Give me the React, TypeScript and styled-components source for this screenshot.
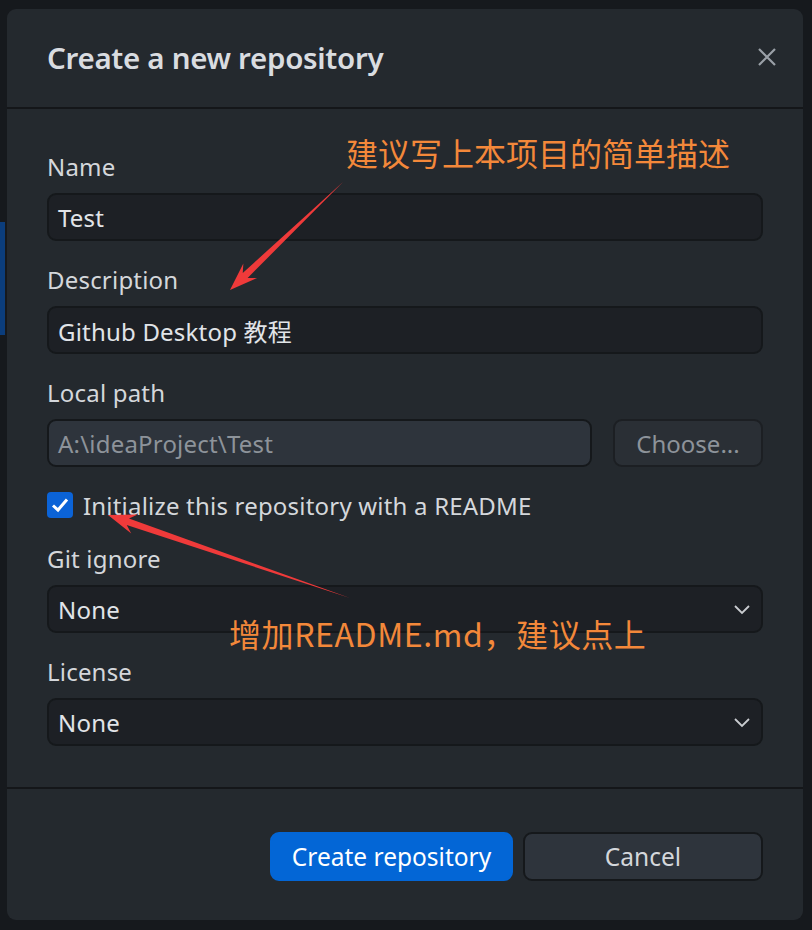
import React from 'react';
import styled, { createGlobalStyle } from 'styled-components';

const GlobalStyle = createGlobalStyle`
    html, body {
        margin: 0;
        padding: 0;
        background: #16191d;
    }
    * {
        box-sizing: border-box;
    }
`;

const Page = styled.div`
    display: flex;
    width: 812px;
    height: 930px;
    font-family: 'Noto Sans', 'Noto Sans CJK SC', sans-serif;
    overflow: hidden;
`;

// 뒤쪽 앱의 가장자리만 살짝 보임
const SideStrip = styled.div`
    width: 7px;
    flex-shrink: 0;
    padding-top: 222px;
`;

const SideBlue = styled.div`
    width: 5px;
    height: 113px;
    background: #0b3d7c;
`;

const Dialog = styled.section`
    position: relative;
    width: 796px;
    height: 911px;
    margin-top: 9px;
    background: #24292e;
    border-radius: 9px;
    display: flex;
    flex-direction: column;
`;

const Header = styled.header`
    height: 100px;
    display: flex;
    align-items: center;
    justify-content: space-between;
    padding: 0 22px 2px 40px;
    border-bottom: 2px solid #141619;
`;

const Title = styled.h1`
    margin: 0;
    font-size: 29.5px;
    font-weight: 600;
    color: #d9dce0;
    letter-spacing: -0.3px;
`;

const CloseButton = styled.button`
    background: none;
    border: none;
    padding: 4px;
    display: flex;
    cursor: pointer;
`;

const Body = styled.div`
    flex: 1;
    padding: 45px 40px 0 40px;
    display: flex;
    flex-direction: column;
    gap: 26px;
    border-bottom: 2px solid #141619;
`;

const Field = styled.div`
    display: flex;
    flex-direction: column;
    gap: 13px;
`;

const Label = styled.label`
    font-size: 24px;
    line-height: 26px;
    letter-spacing: 0.2px;
    color: #d4d7db;
`;

const Input = styled.div<{ $disabled?: boolean }>`
    height: 48px;
    flex: 1 1 auto;
    display: flex;
    align-items: center;
    padding: 0 10px 0 9px;
    border-radius: 9px;
    border: 2px solid #15181b;
    background: ${(p) => (p.$disabled ? '#2e343c' : '#1d2025')};
    color: ${(p) => (p.$disabled ? '#8d939a' : '#e1e4e8')};
    font-size: 24px;
    letter-spacing: 0.2px;
`;

const Row = styled.div`
    display: flex;
    gap: 21px;
`;

const ChooseButton = styled.button`
    width: 150px;
    height: 48px;
    flex-shrink: 0;
    border-radius: 9px;
    border: 2px solid #1c1f23;
    background: #2a2f35;
    color: #8d939a;
    font-family: inherit;
    font-size: 24px;
`;

const CheckRow = styled.div`
    height: 30px;
    margin-top: -3px;
    display: flex;
    align-items: center;
    gap: 10px;
    color: #d4d7db;
    font-size: 24px;
    letter-spacing: 0.2px;
`;

const CheckBox = styled.span`
    width: 26px;
    height: 26px;
    border-radius: 4px;
    background: #0b63d7;
    display: flex;
    align-items: center;
    justify-content: center;
`;

const Select = styled(Input)`
    justify-content: space-between;
`;

const Footer = styled.footer`
    height: 131px;
    display: flex;
    align-items: center;
    justify-content: flex-end;
    gap: 10px;
    padding: 4px 40px 0 0;
`;

const Button = styled.button<{ $primary?: boolean }>`
    height: 49px;
    width: ${(p) => (p.$primary ? '243px' : '240px')};
    border-radius: 9px;
    border: 2px solid ${(p) => (p.$primary ? '#0366d6' : '#15181b')};
    background: ${(p) => (p.$primary ? '#0366d6' : '#2e343c')};
    color: ${(p) => (p.$primary ? '#ffffff' : '#d4d7db')};
    font-family: inherit;
    font-size: 24.5px;
`;

const Note = styled.div<{ $left: number; $top: number; $spacing?: number }>`
    position: absolute;
    left: ${(p) => p.$left}px;
    top: ${(p) => p.$top}px;
    font-family: 'Noto Sans CJK SC', 'Noto Sans', sans-serif;
    font-size: 32px;
    line-height: 44px;
    letter-spacing: ${(p) => p.$spacing ?? 0}px;
    color: #f3883a;
    white-space: nowrap;
    pointer-events: none;
`;

const Overlay = styled.svg`
    position: absolute;
    inset: 0;
    pointer-events: none;
`;

type Pt = [number, number];

//꼬리는 가늘고 머리는 굵은 빨간 화살표
function arrowPoints(tail: Pt, tip: Pt) {
    const dx = tip[0] - tail[0];
    const dy = tip[1] - tail[1];
    const len = Math.hypot(dx, dy);
    const ux = dx / len;
    const uy = dy / len;
    const nx = -uy;
    const ny = ux;
    const headLen = 28;
    const headW = 10;
    const neckW = 3.5;
    const at = (back: number, side: number): string =>
        `${tip[0] - ux * back + nx * side},${tip[1] - uy * back + ny * side}`;
    return [
        `${tail[0]},${tail[1]}`,
        at(headLen * 0.75, neckW),
        at(headLen, headW),
        `${tip[0]},${tip[1]}`,
        at(headLen, -headW),
        at(headLen * 0.75, -neckW),
    ].join(' ');
}

function Chevron() {
    return (
        <svg width="18" height="12" viewBox="0 0 18 12">
            <path d="M2 3 L9 10 L16 3" fill="none" stroke="#c9ccd0" strokeWidth="1.8" />
        </svg>
    );
}

function App() {
    return (
        <>
            <GlobalStyle />
            <Page>
                <SideStrip>
                    <SideBlue />
                </SideStrip>
                <Dialog>
                    <Header>
                        <Title>Create a new repository</Title>
                        <CloseButton>
                            <svg width="20" height="20" viewBox="0 0 20 20">
                                <path d="M2 2 L18 18 M18 2 L2 18" stroke="#9aa0a7" strokeWidth="2.2" />
                            </svg>
                        </CloseButton>
                    </Header>
                    <Body>
                        <Field>
                            <Label>Name</Label>
                            <Input>Test</Input>
                        </Field>
                        <Field>
                            <Label>Description</Label>
                            <Input>Github Desktop 教程</Input>
                        </Field>
                        <Field>
                            <Label>Local path</Label>
                            <Row>
                                <Input $disabled>A:\ideaProject\Test</Input>
                                <ChooseButton>Choose...</ChooseButton>
                            </Row>
                        </Field>
                        <CheckRow>
                            <CheckBox>
                                <svg width="18" height="16" viewBox="0 0 18 16">
                                    <path d="M2 8.5 L7 13 L16 2.5" fill="none" stroke="#fff" strokeWidth="3" />
                                </svg>
                            </CheckBox>
                            Initialize this repository with a README
                        </CheckRow>
                        <Field>
                            <Label>Git ignore</Label>
                            <Select>
                                None
                                <Chevron />
                            </Select>
                        </Field>
                        <Field>
                            <Label>License</Label>
                            <Select>
                                None
                                <Chevron />
                            </Select>
                        </Field>
                    </Body>
                    <Footer>
                        <Button $primary>Create repository</Button>
                        <Button>Cancel</Button>
                    </Footer>

                    <Note $left={339} $top={121}>建议写上本项目的简单描述</Note>
                    <Note $left={222} $top={602} $spacing={0.6}>增加README.md，建议点上</Note>
                    <Overlay width="796" height="911">
                        <polygon points={arrowPoints([336, 173], [223, 281])} fill="#ef3a3a" />
                        <polygon points={arrowPoints([343, 589], [101, 506])} fill="#ef3a3a" />
                    </Overlay>
                </Dialog>
            </Page>
        </>
    );
}

export default App;
